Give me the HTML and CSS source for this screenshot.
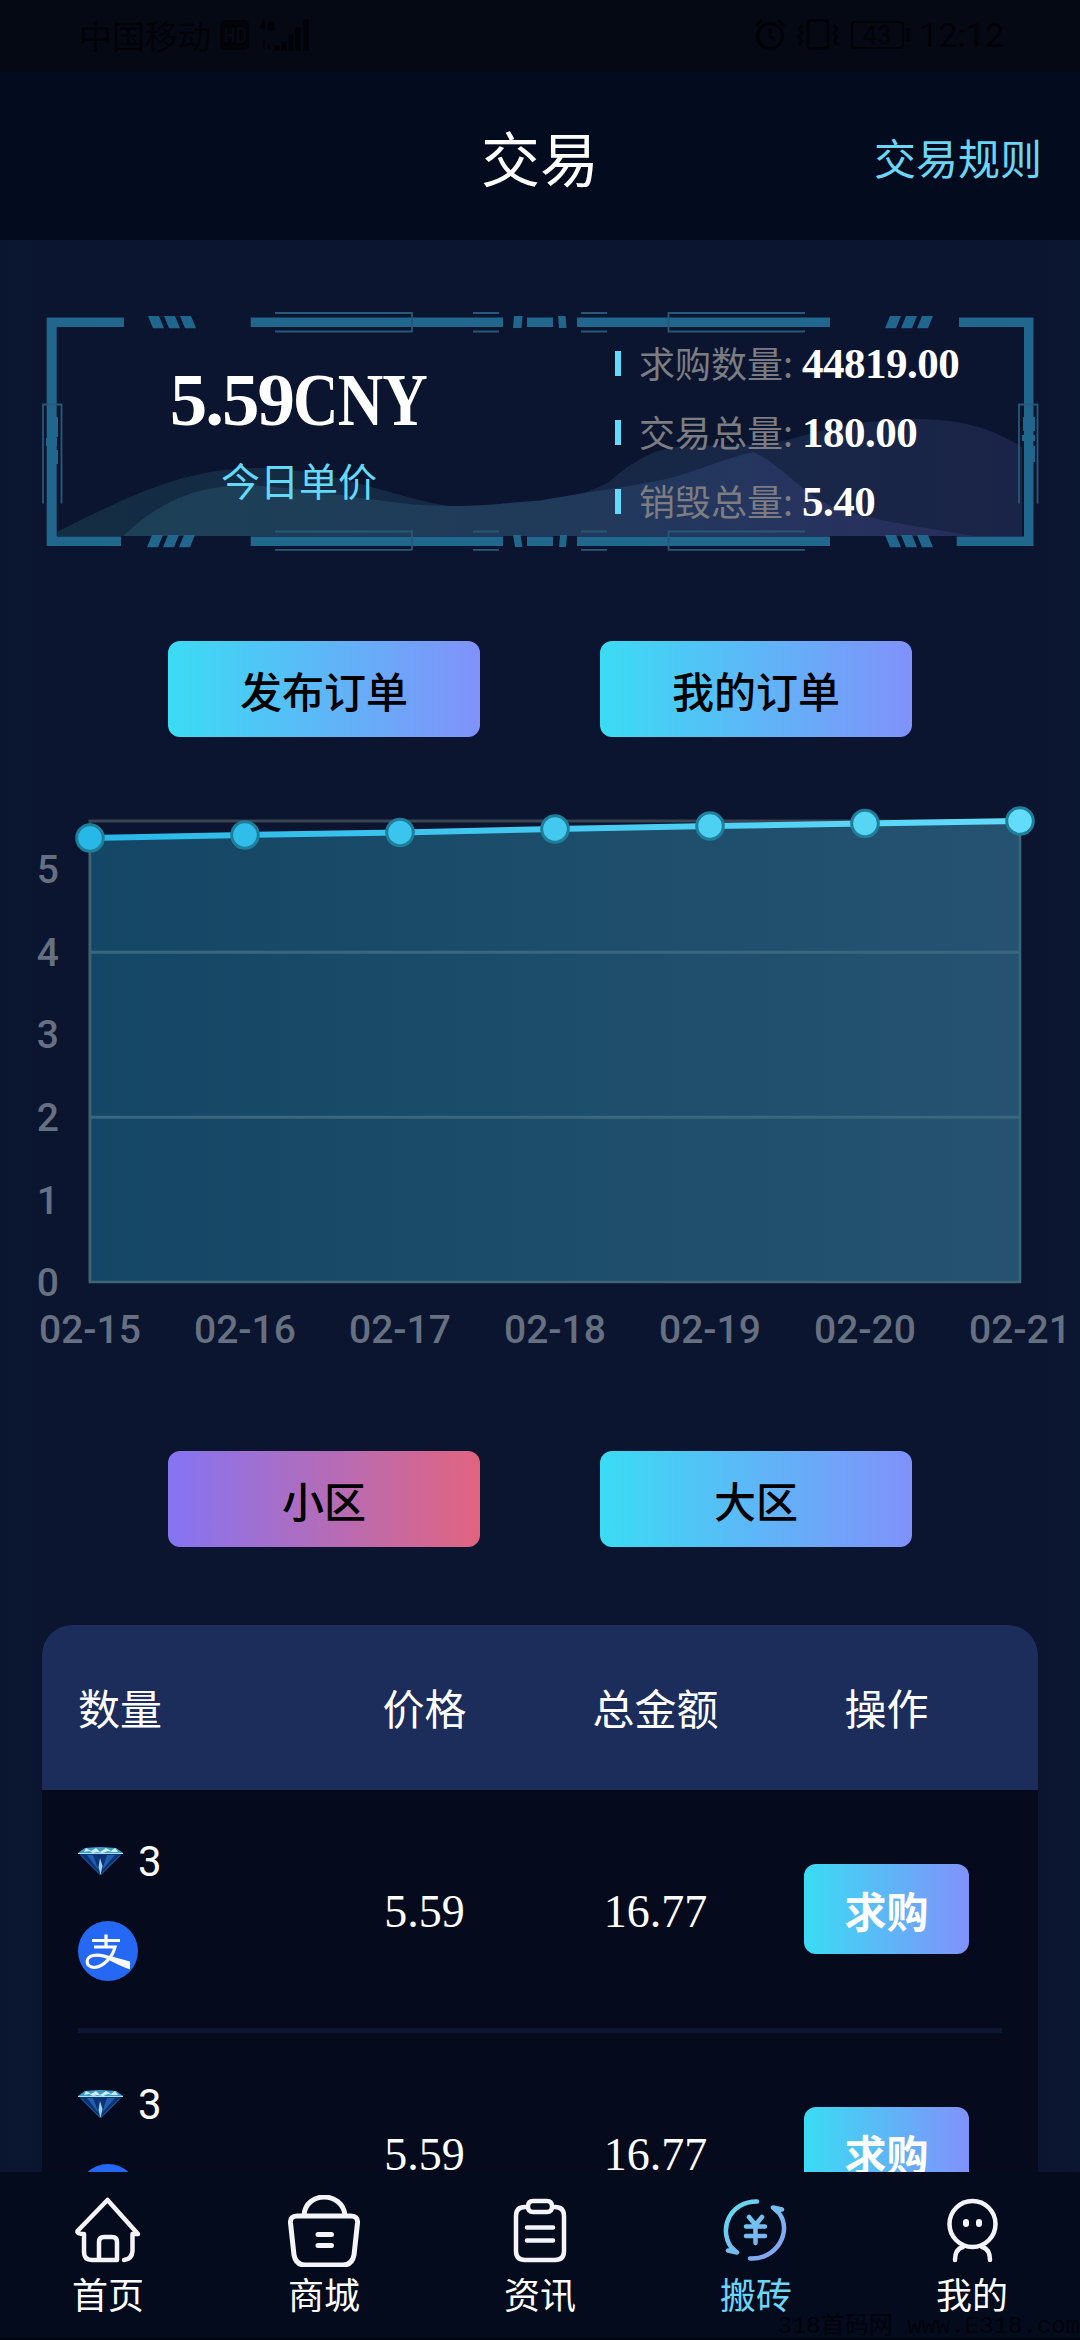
FILE: index.html
```html
<!DOCTYPE html>
<html lang="zh-CN">
<head>
<meta charset="utf-8">
<title>交易</title>
<link rel="stylesheet" href="styles.css">
</head>
<body>
<svg class="defs" width="0" height="0">
  <defs>
    <symbol id="diamond" viewBox="0 0 45 28">
      <path d="M0 6 L7 1 L22 0 L38 1 L45 6 L22.500 28Z" fill="#0d3276"/>
      <path d="M0 6 L7 1 L22 0 L38 1 L45 6Z" fill="#3f9cc4"/>
      <path d="M8 1l5 3 5-3 4 4 6-4 5 3 4-3 3 4-6 0-4-1-5 2-6-1-4 1-4-2-5 1z" fill="#cdeef8"/>
      <path d="M0 6.500H45" stroke="#a5e4f5" stroke-width="1.200"/>
      <path d="M9 8 21 24 15 8zM29 8 24 23 37 8z" fill="#1f5fae"/>
      <path d="M22 11 20.500 20 22.500 28 24.500 19z" fill="#9ad4ee"/>
      <path d="M3 8.500 22.500 28 42 8.500" fill="none" stroke="#2874b5" stroke-width=".9"/>
    </symbol>
    <symbol id="alipay" viewBox="0 0 60 60">
      <circle cx="30" cy="30" r="30" fill="#2468f4"/>
      <path d="M14 19.500H42M28 13.500V26M16 26H37C35 35 26 46 16 46.500C7 46 7 36 15 34.500C24 32.500 34 38 51 44" fill="none" stroke="#fff" stroke-width="3.200"/>
      <path d="M32 35 52 40.500V48.500C44 46 37 42 29 38Z" fill="#fff"/>
    </symbol>
  </defs>
</svg>
<div class="screen">
  <div class="status">
    <div class="status-side">
      <span>中国移动</span>
      <svg width="92" height="32" viewBox="0 0 92 32" fill="#010309">
        <rect x="0" y="1" width="29" height="30" rx="5"/>
        <path d="M6 9V23M6 16H13M13 9V23M18 9V23H20Q25 23 25 16T20 9Z" fill="none" stroke="#040a15" stroke-width="2.500"/>
        <path d="M44 1 40 9H46M44 5V12M54 4Q48 1 48 7T54 11V7M44 20V30M49 24V30M55 27h4v4h-4zM62 23h4v8h-4zM69 16h4v15h-4zM76 9h4v22h-4zM84 1h4v30h-4z" stroke="#010309" stroke-width="1.200"/>
      </svg>
    </div>
    <div class="status-side right">
      <svg width="156" height="32" viewBox="0 0 156 32" fill="none" stroke="#010309" stroke-width="3">
        <circle cx="15" cy="17" r="12.500"/><path d="M15 9V17L20 21M1 7 7 1M29 7 23 1"/>
        <rect x="53" y="1.500" width="20" height="28" rx="3"/><path d="M47 6 44 10 47 14 44 18 47 22 44 26M79 6 82 10 79 14 82 18 79 22 82 26"/>
        <rect x="97" y="3" width="51" height="26" rx="3" stroke-width="2"/><path d="M153 9V23"/>
        <text x="122" y="25" text-anchor="middle" class="battery">43</text>
      </svg>
      <span>12:12</span>
    </div>
  </div>

  <header class="header">
    <h1>交易</h1>
    <a class="rules">交易规则</a>
  </header>

  <main class="content">
    <section class="card">
      <svg class="card-bg" width="1000" height="240" viewBox="40 308 1000 240">
        <defs>
          <linearGradient id="w1"><stop offset="0" stop-color="#132d42"/><stop offset=".4" stop-color="#152945"/><stop offset="1" stop-color="#1a2448"/></linearGradient>
          <linearGradient id="w2"><stop offset="0" stop-color="#1c4056"/><stop offset=".5" stop-color="#203a5a"/><stop offset=".75" stop-color="#25355f"/><stop offset="1" stop-color="#282d5b"/></linearGradient>
        </defs>
        <path fill="url(#w1)" d="M57 532C140 490 190 468 260 468C350 469 410 509 490 510C535 508 585 496 609 482C635 460 648 453 670 448C700 442 740 450 788 440C840 424 880 419 919 419C965 420 990 428 1022 447V536H57Z"/>
        <path fill="url(#w2)" d="M123 536C160 502 190 489 237 485C290 486 340 496 400 503C460 510 500 503 540 500.500C600 490 650 484 678 476C710 466 728 458 753 452C780 463 800 492 833 507C870 520 920 527 974 536Z"/>
        <g fill="#21668c">
          <path d="M124 317.500H46.700V546H121V536.500H56.700V327H124ZM959 317.500H1033.500V546H956.700V536.500H1024V327H959Z"/>
          <path d="M250.700 317.500H503V327H250.700ZM527 317.500H553V327H527ZM577 317.500H830V327H577ZM250.700 536.500H503V546H250.700ZM527 536.500H553V546H527ZM577 536.500H830V546H577Z"/>
          <path d="M148 316h11l5 12.300h-11zM164 316h11l5 12.300h-11zM180 316h11l5 12.300h-11zM152 535h11l-5 12.300h-11zM168 535h11l-5 12.300h-11zM184 535h11l-5 12.300h-11z"/>
          <path d="M890 316h11l-5 12.300h-11zM906 316h11l-5 12.300h-11zM922 316h11l-5 12.300h-11zM885 535h11l5 12.300h-11zM901 535h11l5 12.300h-11zM917 535h11l5 12.300h-11z"/>
          <path d="M514 316h8.500l-1 12h-8.500zM558 316h7.500l1 12h-7.500zM513 535h7.500l2 12h-7.500zM560 535h7l-1 12h-7z"/>
          <path d="M48 417h10v20h-10zM46 438h11v8h-11zM47 450h11v14h-11zM1023 417h12v14h-12zM1022 435h13v6h-13zM1024 446h11v16h-11z"/>
        </g>
        <g fill="none" stroke="#285877" stroke-width="1.800">
          <path d="M275 313H412V331.500H275M805 313H668.500V331.500H805M275 531.500H412V550M805 531.500H668.500V550"/>
          <path d="M473 313H499M473 331.500H499M581 313H607M581 331.500H607M473 531.500H499M581 531.500H607"/>
          <path d="M43 503.500V404.500H61.500V503.500M1019 503.500V404.500H1037.500V503.500"/>
          <path d="M275 549.800H412M668 549.800H805M473 549.800H499M581 549.800H607"/>
        </g>
      </svg>
      <div class="price">
        <div class="price-value">5.59<span class="unit">CNY</span></div>
        <div class="price-label">今日单价</div>
      </div>
      <ul class="stats">
        <li><i></i><span>求购数量:</span><b>44819.00</b></li>
        <li><i></i><span>交易总量:</span><b>180.00</b></li>
        <li><i></i><span>销毁总量:</span><b>5.40</b></li>
      </ul>
    </section>

    <div class="actions">
      <button class="btn">发布订单</button>
      <button class="btn">我的订单</button>
    </div>

    <svg class="chart" width="1080" height="580" viewBox="0 790 1080 580">
      <defs>
        <linearGradient id="area"><stop offset="0" stop-color="#144665"/><stop offset=".5" stop-color="#1c4d6a"/><stop offset="1" stop-color="#255270"/></linearGradient>
        <linearGradient id="line" gradientUnits="userSpaceOnUse" x1="90" y1="0" x2="1020" y2="0"><stop offset="0" stop-color="#28b8e8"/><stop offset="1" stop-color="#63dcfa"/></linearGradient>
      </defs>
      <path d="M90 1282V821H1020" fill="none" stroke="#3a4452" stroke-width="3"/>
      <path d="M90 838 245 835 400 832.500 555 829 710 826 865 823.500 1020 821V1282H90Z" fill="url(#area)"/>
      <path d="M90 838V1282H1020V821" fill="none" stroke="#3d6675" stroke-width="2.600"/>
      <path d="M91 952.300H1019M91 1117.300H1019" stroke="#39677f" stroke-width="3"/>
      <path d="M90 838 245 835 400 832.500 555 829 710 826 865 823.500 1020 821" fill="none" stroke="url(#line)" stroke-width="6"/>
      <g stroke="#1e7f9a" stroke-width="3">
        <circle cx="90" cy="838" r="13.300" fill="#28b8e8"/>
        <circle cx="245" cy="835" r="13.300" fill="#30bdea"/>
        <circle cx="400" cy="832.500" r="13.300" fill="#3bc4ee"/>
        <circle cx="555" cy="829" r="13.300" fill="#43c9ef"/>
        <circle cx="710" cy="826" r="13.300" fill="#4dd0f2"/>
        <circle cx="865" cy="823.500" r="13.300" fill="#57d5f5"/>
        <circle cx="1020" cy="821" r="13.300" fill="#63dcfa"/>
      </g>
      <g class="axis" text-anchor="end">
        <text x="59" y="883">5</text><text x="59" y="966">4</text><text x="59" y="1048">3</text>
        <text x="59" y="1131">2</text><text x="59" y="1214">1</text><text x="59" y="1296">0</text>
      </g>
      <g class="axis" text-anchor="middle">
        <text x="90" y="1343">02-15</text><text x="245" y="1343">02-16</text><text x="400" y="1343">02-17</text>
        <text x="555" y="1343">02-18</text><text x="710" y="1343">02-19</text><text x="865" y="1343">02-20</text>
        <text x="1020" y="1343">02-21</text>
      </g>
    </svg>

    <div class="actions zones">
      <button class="btn active">小区</button>
      <button class="btn">大区</button>
    </div>

    <section class="table">
      <div class="thead"><span>数量</span><span>价格</span><span>总金额</span><span>操作</span></div>
      <div class="row">
        <div class="amount">
          <div class="qty"><svg width="45" height="28"><use href="#diamond"/></svg><span>3</span></div>
          <svg width="60" height="60"><use href="#alipay"/></svg>
        </div>
        <div class="num">5.59</div><div class="num">16.77</div>
        <div><button class="buy">求购</button></div>
      </div>
      <div class="row">
        <div class="amount">
          <div class="qty"><svg width="45" height="28"><use href="#diamond"/></svg><span>3</span></div>
          <svg width="60" height="60"><use href="#alipay"/></svg>
        </div>
        <div class="num">5.59</div><div class="num">16.77</div>
        <div><button class="buy">求购</button></div>
      </div>
    </section>
  </main>

  <nav class="tabs">
    <a class="tab">
      <svg width="72" height="72" viewBox="72 2195 72 72"><path d="M124 2260Q132 2259 132.500 2251V2234H138L107.500 2200 77.500 2231Q77 2234 84 2234V2252Q84 2260 92 2260H117V2242Q117 2237 112 2237H104Q99 2237 99 2242V2260" /></svg>
      <span>首页</span>
    </a>
    <a class="tab">
      <svg width="72" height="72" viewBox="288 2195 72 72"><path stroke-width="5" d="M297 2216H351Q358 2216 357.500 2223L354 2255Q352 2265 343 2265H305Q296 2265 294 2255L290.500 2223Q290 2216 297 2216ZM304 2215C306 2191 342 2191 345 2215M318 2234.500H331.500M318 2245.500H331.500"/></svg>
      <span>商城</span>
    </a>
    <a class="tab">
      <svg width="72" height="72" viewBox="504 2195 72 72"><path d="M528 2207H525Q516 2207 516 2216V2251Q516 2260 525 2260H555Q564 2260 564 2251V2216Q564 2207 555 2207H552M533 2201H547Q552 2201 552 2206.500T547 2212H533Q528 2212 528 2206.500T533 2201ZM527 2227.500H553M527 2240.500H553"/></svg>
      <span>资讯</span>
    </a>
    <a class="tab current">
      <svg width="72" height="72" viewBox="720 2195 72 72">
        <defs><linearGradient id="yen" gradientUnits="userSpaceOnUse" x1="728" y1="2200" x2="782" y2="2260"><stop offset="0" stop-color="#63e0ee"/><stop offset="1" stop-color="#899af0"/></linearGradient></defs>
        <path stroke="url(#yen)" d="M757 2201.500C731 2201 718 2228 731 2247L737 2252.500 728 2250.500M750 2258.500C776 2260 793 2232 779 2213L773 2207.500 782 2209.500M749 2217 755.500 2225 762 2217M755.500 2225V2243M746 2226.500H765M746 2236H765"/>
      </svg>
      <span>搬砖</span>
    </a>
    <a class="tab">
      <svg width="72" height="72" viewBox="936 2195 72 72"><circle cx="972.500" cy="2224" r="23"/><path d="M955 2260Q955 2249 963 2247M990 2260Q990 2249 982 2247"/><path stroke-width="6" d="M966 2222V2224M979 2222V2224"/></svg>
      <span>我的</span>
    </a>
    <div class="watermark">318首码网 www.E318.com</div>
  </nav>
</div>
</body>
</html>
```
FILE: styles.css
```css
* { box-sizing: border-box; margin: 0; padding: 0; }

body {
  background: #0a142e;
  font-family: "Noto Sans CJK SC", sans-serif;
  color: #fff;
}

.defs { position: absolute; }

.screen {
  width: 1080px;
  height: 2340px;
  display: flex;
  flex-direction: column;
  overflow: hidden;
  background: linear-gradient(90deg, #0a1630 0, #0b152f 42px, #0b152f 1038px, #0b1630 100%);
}

.status {
  flex: none;
  height: 72px;
  padding: 0 76px 2px 79px;
  display: flex;
  justify-content: space-between;
  align-items: center;
  background: #040914;
  color: #010309;
  font-size: 33px;
}
.status-side { display: flex; align-items: center; gap: 9px; }
.status-side.right { font-family: Roboto, sans-serif; gap: 10px; font-size: 34px; }
.status-side.right svg { margin-right: -2px; }
.battery { font: 26px Roboto, sans-serif; fill: #010309; stroke: none; }

.header {
  flex: none;
  height: 168px;
  display: grid;
  grid-template-columns: 1fr auto 1fr;
  align-items: center;
  padding: 0 38px;
  background: #030c1e;
}
.header h1 { grid-column: 2; font-size: 59px; font-weight: 400; }
.rules { justify-self: end; font-size: 42px; color: #6cd6f6; }

.content {
  flex: 1;
  min-height: 0;
  overflow: hidden;
  padding-top: 68px;
  display: flex;
  flex-direction: column;
}
.content > * { flex: none; }

.card {
  position: relative;
  margin: 0 40px;
  height: 240px;
  display: grid;
  grid-template-columns: 520px 1fr;
}
.card-bg { position: absolute; left: 0; top: 0; overflow: visible; }
.price, .stats { position: relative; }
.price { padding-top: 47px; text-align: center; }
.price-value {
  height: 90px;
  font: 700 75px/90px "Liberation Serif", serif;
  letter-spacing: -2px;
  white-space: nowrap;
  margin-right: -22px;
}
.unit {
  display: inline-block;
  letter-spacing: -1px;
  transform: scaleX(.84);
  transform-origin: left;
}
.price-label { margin: 5px 2px 0 0; line-height: 58px; font-size: 39px; color: #64dafb; }
.stats { list-style: none; padding: 21px 0 0 55px; }
.stats li { height: 69px; display: flex; align-items: center; white-space: nowrap; }
.stats i { width: 6px; height: 25px; background: #63dafb; margin-right: 18px; }
.stats span { width: 163px; font-size: 36px; color: #7c7d82; padding-bottom: 4px; }
.stats b { font: 700 43px "Liberation Serif", serif; letter-spacing: -.5px; }

.actions { margin-top: 93px; padding: 0 168px; display: flex; justify-content: space-between; }
.btn, .buy {
  border: 0;
  border-radius: 12px;
  font-family: inherit;
  font-size: 42px;
  background: linear-gradient(90deg, #3adcf4, #8191fa);
}
.btn { width: 312px; height: 96px; font-weight: 500; color: #000; }
.btn.active { background: linear-gradient(90deg, #8574f3, #e1647f); }

.chart { display: block; margin-top: 53px; }
.axis { font: 500 39px Roboto, sans-serif; fill: #667081; }
.zones { margin-top: 81px; }

.table {
  margin: 78px 42px 0;
  border-radius: 30px 30px 0 0;
  overflow: hidden;
  background: #050b1c;
}
.thead, .row { display: grid; grid-template-columns: repeat(4, 231px); align-items: center; text-align: center; }
.thead { height: 165px; padding: 0 36px 2px; background: #1c2c5b; font-size: 42px; }
.thead span:first-child { text-align: left; }
.row { height: 243px; margin: 0 36px; border-bottom: 5px solid #0d1732; }
.amount { display: flex; flex-direction: column; align-items: flex-start; gap: 35px; padding-bottom: 1px; }
.qty { display: flex; align-items: center; gap: 15px; height: 50px; font: 42px Roboto, sans-serif; }
.amount > svg { display: block; }
.num { font: 46px "Liberation Serif", serif; padding-top: 4px; }
.buy { width: 165px; height: 90px; font-weight: 700; color: #fff; }

.tabs {
  position: relative;
  flex: none;
  height: 168px;
  display: grid;
  grid-template-columns: repeat(5, 1fr);
  background: #030b1d;
  border-bottom: 2px solid #010510;
}
.tab { padding-top: 23px; display: flex; flex-direction: column; align-items: center; font-size: 36px; }
.tab svg { fill: none; stroke: #f4f4fa; stroke-width: 4.500; stroke-linecap: round; stroke-linejoin: round; }
.tab span { line-height: 50px; margin-top: 1px; }
.current span { color: #6ad7f8; }
.watermark {
  position: absolute;
  right: 0;
  bottom: -7px;
  font: 24px/36px "Liberation Mono", "Noto Sans CJK SC", monospace;
  white-space: nowrap;
  color: #01040c;
}
```
